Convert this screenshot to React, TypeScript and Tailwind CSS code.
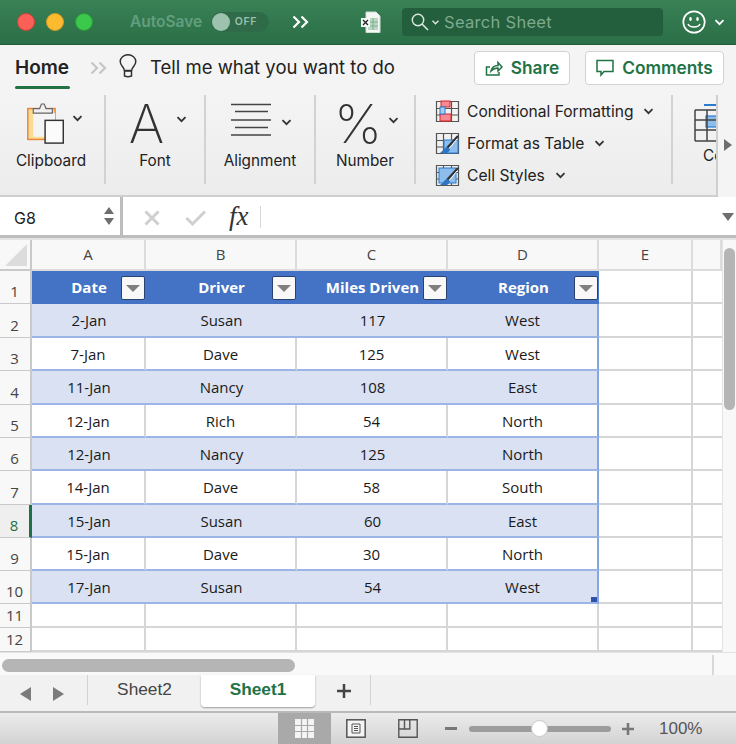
import React from "react";

const Chevron = ({ className = "", color = "#333" }: { className?: string; color?: string }) => (
  <svg width="11" height="7" viewBox="0 0 11 7" className={className}>
    <path d="M1.500 1.200 5.500 5.200 9.500 1.200" fill="none" stroke={color} strokeWidth="1.800" />
  </svg>
);

const DoubleChevron = ({ color }: { color: string }) => (
  <svg width="18" height="14" viewBox="0 0 18 14">
    <path d="M1.500 1.500 7 7 1.500 12.500M9.500 1.500 15 7 9.500 12.500" fill="none" stroke={color} strokeWidth="2.200" />
  </svg>
);

const Clipboard = () => (
  <svg width="40" height="44" viewBox="0 0 44 48">
    <rect x="2" y="7" width="30" height="34" fill="#fbdc93" stroke="#e8843a" strokeWidth="1.600" />
    <rect x="8" y="12" width="24" height="26" fill="#f4f4f4" />
    <path d="M8 7h7l2-5h3l2 5h7v5H8z" fill="#f0f0f0" stroke="#666" strokeWidth="1.300" />
    <rect x="21" y="20" width="20" height="25" fill="#fbfbfb" stroke="#333" strokeWidth="1.600" />
  </svg>
);

const AlignIcon = () => (
  <svg width="42" height="34" viewBox="0 0 42 34">
    <path d="M1 1.500h40M5 8.500h33M1 17h40M5 24.500h33M1 32h40" stroke="#444" strokeWidth="1.600" />
  </svg>
);

const GridBase = () => (
  <path d="M1.500 1.500h22v20h-22zM8.500 1.500v20M16.500 1.500v20M1.500 8.500h22M1.500 15h22" fill="none" stroke="#555" strokeWidth="1.200" />
);

const CondIcon = () => (
  <svg width="25" height="23" viewBox="0 0 25 23">
    <GridBase />
    <rect x="6" y="1" width="9" height="6" fill="#f68a94" stroke="#d22" strokeWidth="1" />
    <rect x="5" y="14" width="11" height="7" fill="#f68a94" stroke="#d22" strokeWidth="1" />
    <rect x="5" y="7" width="5" height="7" fill="#a7cdf0" stroke="#2a7bd0" strokeWidth="1" />
  </svg>
);

const Brush = () => (
  <>
    <path d="M23 4 12 16" stroke="#333" strokeWidth="2.200" />
    <path d="M22 7 13 18" stroke="#fff" strokeWidth="1" />
    <path d="M12 15c-3 1-4 4-7 6h7c2-1 3-3 3-4z" fill="#2e75c6" />
  </>
);

const TableIcon = () => (
  <svg width="25" height="23" viewBox="0 0 25 23">
    <GridBase />
    <rect x="9" y="8" width="14" height="13" fill="#8dbdea" stroke="#2a7bd0" strokeWidth="1" />
    <Brush />
  </svg>
);

const StyleIcon = () => (
  <svg width="25" height="23" viewBox="0 0 25 23">
    <GridBase />
    <rect x="4" y="4" width="17" height="15" fill="#8dbdea" stroke="#2a7bd0" strokeWidth="1" />
    <Brush />
  </svg>
);

const Bulb = () => (
  <svg width="18" height="24" viewBox="0 0 18 24">
    <path d="M5.500 16.500C5 13 1.200 11.500 1.200 7.500a7.800 6.800 0 0 1 15.600 0c0 4-3.800 5.500-4.300 9z" fill="none" stroke="#333" strokeWidth="1.500" />
    <path d="M5.500 17h7v5q-3.500 1.500-7 0z" fill="none" stroke="#333" strokeWidth="1.500" />
  </svg>
);

const FileIcon = () => (
  <svg width="20" height="23" viewBox="0 0 20 23">
    <path d="M5 1h10l4 4v16.500H5z" fill="#f4f7f4" stroke="#cfdcd3" />
    <path d="M7 7h10v12H7z" fill="#bcd8c5" />
    <path d="M7 11h10M7 15h10M12 7v12" stroke="#6fa885" strokeWidth="0.800" />
    <rect x="0" y="7" width="9" height="9" fill="#f4f7f4" />
    <path d="M2 9l5 5M7 9l-5 5" stroke="#222" strokeWidth="1.300" />
  </svg>
);

const Smiley = () => (
  <svg width="24" height="24" viewBox="0 0 24 24">
    <circle cx="12" cy="12" r="10.700" fill="none" stroke="#fff" strokeWidth="1.700" />
    <ellipse cx="8.500" cy="9" rx="1.300" ry="2" fill="#fff" />
    <ellipse cx="15.500" cy="9" rx="1.300" ry="2" fill="#fff" />
    <path d="M6 14c1.500 4 10.500 4 12 0" fill="none" stroke="#fff" strokeWidth="1.500" />
  </svg>
);

const FilterButton = () => (
  <div className="absolute right-[1px] top-[5px] flex h-[24px] w-[24px] items-center justify-center rounded-[2px] border border-[#2b4170] bg-[#f8f8f8]">
    <div className="h-0 w-0 border-x-[7px] border-t-[7px] border-x-transparent border-t-[#7f7f7f]" />
  </div>
);

const cols = ["A", "B", "C", "D", "E", ""];
const gridCols = "grid-cols-[32px_114px_151px_151px_151px_94px_29px]";
const rows = [
  { n: "2", h: "h-[34px]", c: ["2-Jan", "Susan", "117", "West"] },
  { n: "3", h: "h-[33px]", c: ["7-Jan", "Dave", "125", "West"] },
  { n: "4", h: "h-[34px]", c: ["11-Jan", "Nancy", "108", "East"] },
  { n: "5", h: "h-[33px]", c: ["12-Jan", "Rich", "54", "North"] },
  { n: "6", h: "h-[33px]", c: ["12-Jan", "Nancy", "125", "North"] },
  { n: "7", h: "h-[34px]", c: ["14-Jan", "Dave", "58", "South"] },
  { n: "8", h: "h-[33px]", c: ["15-Jan", "Susan", "60", "East"] },
  { n: "9", h: "h-[33px]", c: ["15-Jan", "Dave", "30", "North"] },
  { n: "10", h: "h-[33px]", c: ["17-Jan", "Susan", "54", "West"] },
];

const RowNum = ({ n, active = false }: { n: string; active?: boolean }) => (
  <div
    className={`flex h-full items-end justify-center border-b border-r-2 border-[#c9c9c9] pb-[2px] pr-[1px] text-[15px] leading-[20px] ${
      active ? "border-r-[3px] border-r-[#1e7145] bg-[#efefef] text-[#1e7145]" : "bg-[#f8f8f8] text-[#444]"
    }`}
  >
    {n}
  </div>
);

const Blank = ({ last = false }: { last?: boolean }) => (
  <div className={`h-full border-b-2 border-[#d6d6d6] ${last ? "" : "border-r-2"}`} />
);

const cellFont = "font-['Open_Sans','Noto_Sans',sans-serif]";
const ribbonLabel = "mt-[1px] text-[15.300px] leading-[20px]";

export default function App() {
  return (
    <div className="flex h-[744px] w-[736px] flex-col overflow-hidden bg-white font-['Inter',sans-serif] text-[#222]">
      {/* Title bar */}
      <div className="flex h-[45px] shrink-0 items-center border-b border-[#1f5c39] bg-gradient-to-b from-[#3a8156] to-[#2a6f47]">
        <div className="ml-[17px] h-[18px] w-[18px] rounded-full border border-[#d1403c] bg-[#fb5f57]" />
        <div className="ml-[11px] h-[18px] w-[18px] rounded-full border border-[#d49a28] bg-[#fcbb2e]" />
        <div className="ml-[11px] h-[18px] w-[18px] rounded-full border border-[#2a9a39] bg-[#3bc94b]" />
        <span className="ml-[37px] w-[81px] text-[15.500px] font-semibold text-[#639f7e]">AutoSave</span>
        <div className="relative flex h-[20px] w-[58px] items-center justify-end rounded-full bg-[#2f6b49] pr-[12px]">
          <div className="absolute left-[1px] top-[1px] h-[18px] w-[18px] rounded-full bg-[#9dc2ad]" />
          <span className="text-[10.500px] font-semibold tracking-[0.600px] text-[#9cc0ab]">OFF</span>
        </div>
        <div className="ml-[23px]">
          <DoubleChevron color="#fff" />
        </div>
        <div className="ml-[51px]">
          <FileIcon />
        </div>
        <div className="ml-[21px] flex h-[28px] w-[261px] items-center rounded-[4px] bg-[#235f3c] pl-[9px]">
          <svg width="18" height="18" viewBox="0 0 18 18">
            <circle cx="7" cy="7" r="5.700" fill="none" stroke="#dfe9e3" strokeWidth="1.400" />
            <path d="M11 11l6 6" stroke="#dfe9e3" strokeWidth="1.600" />
          </svg>
          <Chevron className="ml-[1px] scale-75" color="#dfe9e3" />
          <span className="ml-[3px] text-[16.500px] tracking-[0.300px] text-[#7ea98f]">Search Sheet</span>
        </div>
        <div className="ml-[19px]">
          <Smiley />
        </div>
        <Chevron className="ml-[8px]" color="#fff" />
      </div>

      {/* Tab row */}
      <div className="flex h-[50px] shrink-0 items-center bg-[#f4f4f4] pb-[4px]">
        <div className="relative ml-[15px] w-[55px] text-[19px] font-semibold text-[#222]">
          Home
          <div className="absolute -bottom-[7px] left-0 h-[3px] w-full rounded-full bg-[#217346]" />
        </div>
        <div className="ml-[20px]">
          <DoubleChevron color="#c6c6c6" />
        </div>
        <div className="mb-[4px] ml-[11px]">
          <Bulb />
        </div>
        <span className="ml-[13px] w-[324px] text-[18.500px] text-[#222]">Tell me what you want to do</span>
        <button className="flex h-[34px] w-[96px] items-center justify-center gap-[8px] rounded-[4px] border border-[#d2d2d2] bg-white text-[17.300px] font-semibold text-[#217346]">
          <svg width="18" height="18" viewBox="0 0 18 18">
            <path d="M6 16H1.500V8H5M6 12c1-4 4-5.500 7-5.500V3.500l4 4.500-4 4V9c-3 0-5 1-7 3zM2 16h12v-3" fill="none" stroke="#217346" strokeWidth="1.500" />
          </svg>
          Share
        </button>
        <button className="ml-[15px] flex h-[34px] w-[139px] items-center justify-center gap-[8px] rounded-[4px] border border-[#d2d2d2] bg-white text-[17.300px] font-semibold text-[#217346]">
          <svg width="18" height="18" viewBox="0 0 18 18">
            <path d="M1 1.500h16v11H8l-3 3.500v-3.500H1z" fill="none" stroke="#217346" strokeWidth="1.500" />
          </svg>
          Comments
        </button>
      </div>

      {/* Ribbon */}
      <div className="flex h-[102px] shrink-0 bg-[#f4f4f4]">
        <div className="flex h-full w-[718px] overflow-hidden border-b-2 border-r-2 border-[#cfcfcf] bg-gradient-to-b from-[#f4f4f4] to-[#ececec]">
          <div className="flex h-[89px] w-[106px] shrink-0 flex-col items-center border-r-2 border-[#d2d2d2]">
            <div className="flex h-[55px] items-center pl-[5px] pt-[3px]">
              <Clipboard />
              <Chevron className="mb-[12px] ml-[6px]" />
            </div>
            <span className={`${ribbonLabel} pr-[2px]`}>Clipboard</span>
          </div>
          <div className="flex h-[89px] w-[100px] shrink-0 flex-col items-center border-r-2 border-[#d2d2d2]">
            <div className="flex h-[55px] items-center pl-[6px]">
              <span className="mt-[3px] h-[50px] text-[54px] font-extralight leading-[50px] text-[#333]">A</span>
              <Chevron className="mb-[6px] ml-[12px]" />
            </div>
            <span className={ribbonLabel}>Font</span>
          </div>
          <div className="flex h-[89px] w-[110px] shrink-0 flex-col items-center border-r-2 border-[#d2d2d2]">
            <div className="flex h-[55px] items-center pl-[2px] pb-[5px]">
              <AlignIcon />
              <Chevron className="mt-[5px] ml-[9px]" />
            </div>
            <span className={ribbonLabel}>Alignment</span>
          </div>
          <div className="flex h-[89px] w-[100px] shrink-0 flex-col items-center border-r-2 border-[#d2d2d2]">
            <div className="flex h-[55px] items-center pl-[3px]">
              <span className="mt-[2px] h-[50px] text-[54px] font-extralight leading-[50px] text-[#333]">%</span>
              <Chevron className="mb-[4px] ml-[6px]" />
            </div>
            <span className={ribbonLabel}>Number</span>
          </div>
          <div className="flex h-[89px] w-[257px] shrink-0 flex-col gap-[9px] border-r-2 border-[#d2d2d2] pl-[19px] pt-[5px] text-[15.600px]">
            <div className="flex h-[23px] items-center gap-[7px]">
              <CondIcon />
              <span>Conditional Formatting</span>
              <Chevron className="ml-[3px]" />
            </div>
            <div className="flex h-[23px] items-center gap-[7px]">
              <TableIcon />
              <span>Format as Table</span>
              <Chevron className="ml-[3px]" />
            </div>
            <div className="flex h-[23px] items-center gap-[7px]">
              <StyleIcon />
              <span>Cell Styles</span>
              <Chevron className="ml-[3px]" />
            </div>
          </div>
          <div className="flex h-[89px] shrink-0 flex-col pl-[21px] pt-[9px]">
            <svg width="40" height="38" viewBox="0 0 40 38">
              <path d="M10 1h30" stroke="#2a7bd0" strokeWidth="2" />
              <rect x="12" y="12" width="28" height="11" fill="#8dbdea" stroke="#2a7bd0" strokeWidth="1.200" />
              <path d="M1 6h39M1 16h39M1 26h39M1 37h39M1 6v31M13 6v31" fill="none" stroke="#444" strokeWidth="1.500" />
            </svg>
            <span className="mt-[4px] pl-[9px] text-[15.300px] leading-[20px]">Cell</span>
          </div>
        </div>
        <div className="flex flex-1 items-start justify-center pl-[1px] pt-[44px]">
          <div className="h-0 w-0 border-y-[6px] border-l-[8px] border-y-transparent border-l-[#6e6e6e]" />
        </div>
      </div>

      {/* Formula bar */}
      <div className="flex h-[41px] shrink-0 items-center border-b-[3px] border-[#bdbdbd] bg-white">
        <div className="flex h-full w-[123px] items-center justify-between border-r-[3px] border-[#bdbdbd] pl-[14px] pr-[6px] pt-[3px]">
          <span className="text-[16px] text-[#222]">G8</span>
          <div className="mb-[3px] flex flex-col gap-[4px]">
            <div className="h-0 w-0 border-x-[5px] border-b-[7px] border-x-transparent border-b-[#6e6e6e]" />
            <div className="h-0 w-0 border-x-[5px] border-t-[7px] border-x-transparent border-t-[#6e6e6e]" />
          </div>
        </div>
        <svg width="16" height="16" viewBox="0 0 16 16" className="ml-[21px] mt-[3px]">
          <path d="M1.500 1.500l13 13M14.500 1.500l-13 13" stroke="#cfcfcf" strokeWidth="3" />
        </svg>
        <svg width="21" height="16" viewBox="0 0 21 16" className="ml-[25px] mt-[3px]">
          <path d="M1.500 8l6 6L20 1.500" fill="none" stroke="#cfcfcf" strokeWidth="3" />
        </svg>
        <span className="ml-[23px] font-['Liberation_Serif',serif] text-[27px] italic leading-none text-[#333]">fx</span>
        <div className="ml-[11px] mt-[2px] h-[22px] w-px bg-[#d8d8d8]" />
        <div className="ml-auto mr-[2px] mt-[2px] h-0 w-0 border-x-[6px] border-t-[8px] border-x-transparent border-t-[#6e6e6e]" />
      </div>

      {/* Sheet */}
      <div className="flex min-h-0 flex-1 border-t-2 border-[#e3e3e3]">
        <div className={`w-[722px] shrink-0 text-[#1a1a1a] ${cellFont}`}>
          <div className={`grid h-[31px] ${gridCols} text-[15px] text-[#444]`}>
            <div className="flex h-full items-end justify-end border-b-2 border-r-2 border-[#c9c9c9] bg-[#f8f8f8] pb-[3px] pr-[3px]">
              <div className="h-0 w-0 border-b-[22px] border-l-[22px] border-b-[#dcdcdc] border-l-transparent" />
            </div>
            {cols.map((c, i) => (
              <div key={i} className="flex items-center justify-center border-b-2 border-r-2 border-[#dcdcdc] bg-[#f8f8f8]">
                {c}
              </div>
            ))}
          </div>
          <div className={`grid h-[33px] ${gridCols} text-[15px]`}>
            <RowNum n="1" />
            {["Date", "Driver", "Miles Driven", "Region"].map((t) => (
              <div key={t} className="relative flex items-center justify-center bg-[#4472c4] font-bold text-white">
                {t}
                <FilterButton />
              </div>
            ))}
            <Blank />
            <Blank last />
          </div>
          {rows.map((r, i) => {
            const band = i % 2 === 0;
            return (
              <div key={r.n} className={`grid ${r.h} ${gridCols} text-[15px]`}>
                <RowNum n={r.n} active={r.n === "8"} />
                {r.c.map((c, j) => (
                  <div
                    key={j}
                    className={`relative flex items-center justify-center border-b-2 border-[#9ab5e6] pt-[1px] ${
                      band ? "bg-[#d9e1f2]" : "bg-white"
                    } ${j === 3 ? "border-r-2 border-r-[#84a5e0]" : band ? "" : "border-r-2 border-r-[#d6d6d6]"}`}
                  >
                    {c}
                    {r.n === "10" && j === 3 && (
                      <div className="absolute bottom-0 right-0 h-[5px] w-[6px] bg-[#2f52a8]" />
                    )}
                  </div>
                ))}
                <Blank />
                <Blank last />
              </div>
            );
          })}
          {["11", "12"].map((n) => (
            <div key={n} className={`grid h-[24px] ${gridCols} text-[15px]`}>
              <RowNum n={n} />
              <Blank />
              <Blank />
              <Blank />
              <Blank />
              <Blank />
              <Blank last />
            </div>
          ))}
        </div>
        <div className="flex-1 border-l border-[#e3e3e3] bg-[#f8f8f8] px-[1px] pt-[8px]">
          <div className="h-[162px] rounded-full bg-[#b5b5b5]" />
        </div>
      </div>

      {/* Horizontal scroll */}
      <div className="flex h-[23px] shrink-0 items-center border-t border-[#e3e3e3] bg-[#f9f9f9] pl-[2px] pt-[2px]">
        <div className="h-[13px] w-[293px] rounded-full bg-[#b5b5b5]" />
        <div className="ml-[417px] h-full w-[2px] bg-[#d8d8d8]" />
      </div>

      {/* Sheet tabs */}
      <div className="flex h-[38px] shrink-0 border-b-2 border-[#b9b9b9] bg-[#f1f1f1]">
        <div className="flex w-[87px] items-center pl-[20px] pt-[2px]">
          <div className="h-0 w-0 border-y-[7px] border-r-[11px] border-y-transparent border-r-[#7b7b7b]" />
          <div className="ml-[22px] h-0 w-0 border-y-[7px] border-l-[11px] border-y-transparent border-l-[#7b7b7b]" />
        </div>
        <div className="mb-[6px] flex w-[114px] items-center justify-center border-l border-[#d2d2d2] font-['Liberation_Sans',sans-serif] text-[17.300px] text-[#444]">
          Sheet2
        </div>
        <div className="mb-[4px] flex w-[114px] items-center justify-center rounded-b-[4px] bg-white pb-[2px] font-['Liberation_Sans',sans-serif] text-[17.300px] font-bold text-[#217346] shadow-[0_1px_2px_rgba(0,0,0,0.35)]">
          Sheet1
        </div>
        <div className="mb-[6px] flex w-[56px] items-center justify-center border-r border-[#d2d2d2] pl-[2px] pt-[2px]">
          <svg width="16" height="16" viewBox="0 0 16 16">
            <path d="M8 1v14M1 8h14" stroke="#444" strokeWidth="2.500" />
          </svg>
        </div>
      </div>

      {/* Status bar */}
      <div className="flex h-[31px] shrink-0 items-center bg-gradient-to-b from-[#ececec] to-[#d3d3d3]">
        <div className="ml-[278px] flex h-full w-[53px] items-center justify-center bg-[#a9a9a9]">
          <svg width="19" height="19" viewBox="0 0 19 19">
            <rect width="19" height="19" fill="#f4f4f4" />
            <path d="M6.500 0v19M12.500 0v19M0 6.500h19M0 12.500h19" stroke="#a9a9a9" strokeWidth="1.200" />
          </svg>
        </div>
        <svg width="20" height="19" viewBox="0 0 20 19" className="ml-[15px]">
          <rect x="0.800" y="0.800" width="18.400" height="17.400" fill="#f4f4f4" stroke="#555" strokeWidth="1.500" />
          <path d="M6 5h8v9H6zM8 7.500h4M8 9.500h4M8 11.500h4" fill="none" stroke="#555" />
        </svg>
        <svg width="20" height="19" viewBox="0 0 20 19" className="ml-[32px]">
          <path d="M0.800 0.800h18.400v17.400H0.800zM0.800 10h11V0.800M6.500 0.800V10" fill="none" stroke="#555" strokeWidth="1.400" />
        </svg>
        <div className="ml-[27px] h-[3px] w-[12px] bg-[#777]" />
        <div className="relative ml-[12px] h-[6px] w-[142px] rounded-full bg-[#9c9c9c]">
          <div className="absolute left-[62px] top-[-6px] h-[17px] w-[17px] rounded-full border border-[#c8c8c8] bg-white" />
        </div>
        <svg width="12" height="12" viewBox="0 0 12 12" className="ml-[11px]">
          <path d="M6 0v12M0 6h12" stroke="#777" strokeWidth="2.600" />
        </svg>
        <span className="ml-[25px] font-['Liberation_Sans',sans-serif] text-[17px] text-[#555]">100%</span>
      </div>
    </div>
  );
}
